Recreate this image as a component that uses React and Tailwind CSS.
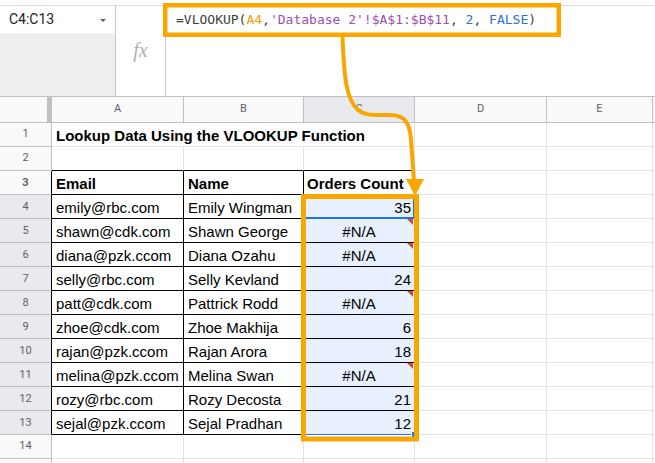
import React from "react";

const baris = [
  { email: "emily@rbc.com", nama: "Emily Wingman", nilai: "35" },
  { email: "shawn@cdk.com", nama: "Shawn George", nilai: "#N/A" },
  { email: "diana@pzk.ccom", nama: "Diana Ozahu", nilai: "#N/A" },
  { email: "selly@rbc.com", nama: "Selly Kevland", nilai: "24" },
  { email: "patt@cdk.com", nama: "Pattrick Rodd", nilai: "#N/A" },
  { email: "zhoe@cdk.com", nama: "Zhoe Makhija", nilai: "6" },
  { email: "rajan@pzk.ccom", nama: "Rajan Arora", nilai: "18" },
  { email: "melina@pzk.ccom", nama: "Melina Swan", nilai: "#N/A" },
  { email: "rozy@rbc.com", nama: "Rozy Decosta", nilai: "21" },
  { email: "sejal@pzk.ccom", nama: "Sejal Pradhan", nilai: "12" },
];

// header kolom
const HeaderKolom = () => (
  <div className="flex h-[27px] border-t border-b border-[#c0c0c0] font-['Roboto',sans-serif] text-[11px] text-[#5f6368]">
    <div className="w-[47px] bg-[#f8f9fa]" />
    <div className="w-[5px] bg-[#c0c0c0]" />
    <div className="w-[132px] bg-[#f8f9fa] border-r border-[#c0c0c0] flex items-center justify-center">A</div>
    <div className="w-[120px] bg-[#f8f9fa] border-r border-[#c0c0c0] flex items-center justify-center">B</div>
    <div className="w-[111px] bg-[#e8eaed] border-r border-[#c0c0c0] flex items-center justify-center">C</div>
    <div className="w-[132px] bg-[#f8f9fa] border-r border-[#c0c0c0] flex items-center justify-center">D</div>
    <div className="w-[106px] bg-[#f8f9fa] border-r border-[#c0c0c0] flex items-center justify-center">E</div>
    <div className="flex-1 bg-[#f8f9fa]" />
  </div>
);

const NomorBaris = ({ no, pilih, hitam }) => (
  <div
    className={`w-[52px] shrink-0 border-b border-r border-b-[#c0c0c0] flex items-center justify-center font-['Roboto',sans-serif] text-[11px] text-[#5f6368] ${
      pilih ? "bg-[#e8eaed]" : "bg-[#f8f9fa]"
    } ${hitam ? "border-r-black" : "border-r-[#c0c0c0]"}`}
  >
    {no}
  </div>
);

const SelKosong = ({ w, extra = "" }) => (
  <div className={`${w} shrink-0 border-r border-b border-[#e2e3e3] ${extra}`} />
);

const Segitiga = () => (
  <div className="absolute right-[1px] top-0 w-0 h-0 border-l-[6px] border-l-transparent border-t-[6px] border-t-[#d2493c]" />
);

export default function App() {
  return (
    <div className="w-[655px] h-[463px] bg-white relative overflow-hidden font-['Liberation_Sans',Arial,sans-serif] text-black">
      {/* bar formula */}
      <div className="h-[5px]" />
      <div className="flex h-[91px] border-t border-[#dadce0]">
        <div className="w-[116px] border-r border-[#c7c7c7] flex flex-col">
          <div className="h-[27px] bg-white flex items-start justify-between pl-[9px] pr-[9px] pt-[5px] font-['Roboto',sans-serif] text-[14px] leading-[17px] text-[#202124]">
            <span>C4:C13</span>
            <div className="mt-[8px] w-0 h-0 border-l-[3px] border-r-[3px] border-t-[3px] border-l-transparent border-r-transparent border-t-[#5f6368]" />
          </div>
          <div className="flex-1 bg-[#eeeeee]" />
        </div>
        <div className="w-[50px] border-r border-[#c7c7c7] flex items-center justify-center">
          <span className="font-['Liberation_Serif',serif] italic text-[20px] text-[#b0b3b8] -mt-[2px]">fx</span>
        </div>
        <div className="flex-1 pl-[10px] pt-[5px] font-['DejaVu_Sans_Mono',monospace] text-[13px] leading-[17px] whitespace-nowrap text-[#3c4043]">
          =VLOOKUP(<span className="text-[#f29d00]">A4</span>,
          <span className="text-[#9a4fb2]">'Database 2'!$A$1:$B$11</span>,{" "}
          <span className="text-[#2f6fd1]">2</span>, <span className="text-[#2f6fd1]">FALSE</span>)
        </div>
      </div>

      {/* grid */}
      <HeaderKolom />

      {/* baris 1 */}
      <div className="flex h-[24px]">
        <NomorBaris no={1} />
        <div className="w-[363px] shrink-0 border-r border-b border-[#e2e3e3] flex items-end pl-[4px] pb-[2px] text-[15px] leading-[17px] font-bold whitespace-nowrap">
          Lookup Data Using the VLOOKUP Function
        </div>
        <SelKosong w="w-[132px]" />
        <SelKosong w="w-[106px]" />
        <div className="flex-1 border-b border-[#e2e3e3]" />
      </div>

      {/* baris 2 */}
      <div className="flex h-[24px]">
        <NomorBaris no={2} />
        <SelKosong w="w-[132px]" extra="border-b-black" />
        <SelKosong w="w-[120px]" extra="border-b-black" />
        <SelKosong w="w-[111px]" extra="border-b-black" />
        <SelKosong w="w-[132px]" />
        <SelKosong w="w-[106px]" />
        <div className="flex-1 border-b border-[#e2e3e3]" />
      </div>

      {/* baris 3 */}
      <div className="flex h-[24px] text-[15px] leading-[17px] font-bold">
        <NomorBaris no={3} hitam />
        <div className="w-[132px] shrink-0 border-r border-b border-black flex items-end pl-[4px] pb-[2px]">Email</div>
        <div className="w-[120px] shrink-0 border-r border-b border-black flex items-end pl-[4px] pb-[2px]">Name</div>
        <div className="w-[111px] shrink-0 border-r border-b border-black flex items-end pl-[3px] pb-[2px] whitespace-nowrap">Orders Count</div>
        <SelKosong w="w-[132px]" />
        <SelKosong w="w-[106px]" />
        <div className="flex-1 border-b border-[#e2e3e3]" />
      </div>

      {/* baris data */}
      {baris.map((b, i) => {
        const error = b.nilai === "#N/A";
        const terakhir = i === baris.length - 1;
        return (
          <div key={b.email} className="flex h-[24px] text-[15px] leading-[17px]">
            <NomorBaris no={i + 4} pilih hitam />
            <div className="w-[132px] shrink-0 border-r border-b border-black flex items-end pl-[4px] pb-[2px] whitespace-nowrap">{b.email}</div>
            <div className="w-[120px] shrink-0 border-r border-b border-black flex items-end pl-[4px] pb-[2px] whitespace-nowrap">{b.nama}</div>
            <div
              className={`relative w-[111px] shrink-0 border-r border-b bg-[#e8f0fe] border-r-[#1a73e8] flex items-end pb-[2px] ${
                terakhir ? "border-b-[#1a73e8]" : "border-b-black"
              } ${error ? "justify-center" : "justify-end pr-[3px]"}`}
            >
              {b.nilai}
              {error && <Segitiga />}
              {i === 0 && <div className="absolute -left-[1px] -top-[1px] -right-[1px] -bottom-[1px] border-2 border-[#1a73e8]" />}
              {terakhir && (
                <div className="absolute -right-[4px] -bottom-[4px] w-[7px] h-[7px] bg-[#1a73e8] border border-white" />
              )}
            </div>
            <SelKosong w="w-[132px]" />
            <SelKosong w="w-[106px]" />
            <div className="flex-1 border-b border-[#e2e3e3]" />
          </div>
        );
      })}

      {/* baris 14 & sisa baris 15 */}
      {[14, null].map((n, idx) => (
        <div key={idx} className="flex h-[24px]">
          <NomorBaris no={n} />
          <SelKosong w="w-[132px]" />
          <SelKosong w="w-[120px]" />
          <SelKosong w="w-[111px]" />
          <SelKosong w="w-[132px]" />
          <SelKosong w="w-[106px]" />
          <div className="flex-1 border-b border-[#e2e3e3]" />
        </div>
      ))}

      {/* anotasi oranye */}
      <svg className="absolute inset-0 pointer-events-none" width="655" height="463" viewBox="0 0 655 463">
        <rect x="165.25" y="5.25" width="393.5" height="29.5" fill="none" stroke="#f9a602" strokeWidth="4.5" />
        <rect x="303.5" y="196.5" width="113" height="242.5" fill="none" stroke="#f9a602" strokeWidth="5" />
        <path
          d="M342.5 37 C344 75 346 100 358 110 C364 115 372 115 380 115 L390 115 C404 115 410 122 411 140 L414 181"
          fill="none"
          stroke="#f9a602"
          strokeWidth="4"
        />
        <polygon points="406,179 424,179 415,196" fill="#f9a602" />
      </svg>
    </div>
  );
}
